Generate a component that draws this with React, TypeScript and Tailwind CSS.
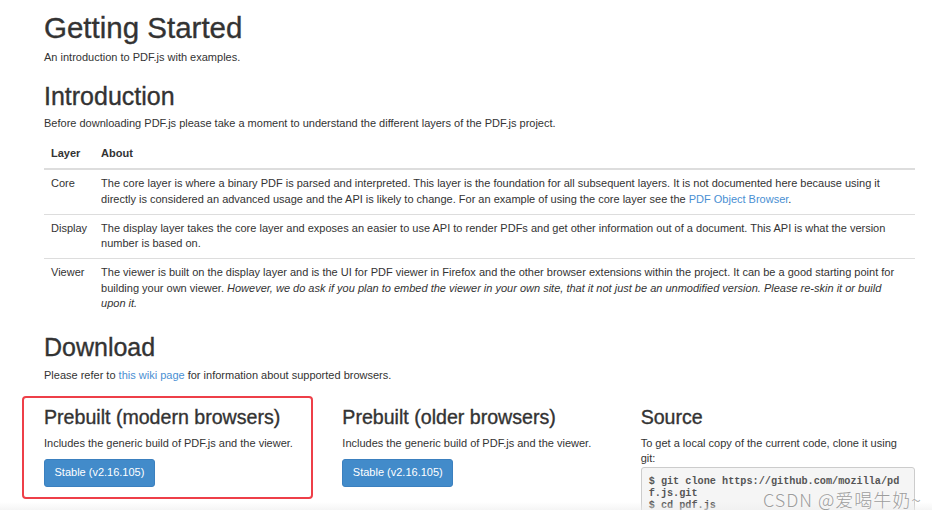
import React from "react";

const linkCls = "text-[#4a8fd3]";
const headStroke = "[-webkit-text-stroke:0.35px_#333]";
const cell = "px-[7px] pt-[6px] pb-[6.5px] align-top";

function StableButton() {
  return (
    <button className="rounded-[3px] border border-[#3b80bf] bg-[#428bca] px-[9.5px] py-[5px] text-[11px] leading-[15.5px] text-white">
      Stable (v2.16.105)
    </button>
  );
}

export default function App() {
  return (
    <div className="relative h-[517px] w-[932px] overflow-hidden bg-white font-['Liberation_Sans',Arial,sans-serif] text-[#333]">
      <div className="relative h-[510px] overflow-hidden">
        <div className="ml-[44px] w-[871px]">
          <h1 className={`mt-[12px] text-[29.5px] leading-[32px] ${headStroke}`}>Getting Started</h1>
          <p className="mt-[6px] text-[11px] leading-[15.5px]">An introduction to PDF.js with examples.</p>

          <h2 className={`mt-[17px] text-[25px] leading-[27px] ${headStroke}`}>Introduction</h2>
          <p className="mt-[6.5px] text-[11px] leading-[15.5px]">
            Before downloading PDF.js please take a moment to understand the different layers of the PDF.js project.
          </p>

          <table className="mt-[7px] w-full border-collapse text-left text-[11px] leading-[15.5px]">
            <thead>
              <tr className="border-b-2 border-[#ddd]">
                <th className="w-[46px] px-[7px] py-[7px] font-bold">Layer</th>
                <th className="px-[7px] py-[7px] font-bold">About</th>
              </tr>
            </thead>
            <tbody>
              <tr className="border-b border-[#ddd]">
                <td className={cell}>Core</td>
                <td className={cell}>
                  The core layer is where a binary PDF is parsed and interpreted. This layer is the foundation for all
                  subsequent layers. It is not documented here because using it directly is considered an advanced usage
                  and the API is likely to change. For an example of using the core layer see the{" "}
                  <a className={linkCls}>PDF Object Browser</a>.
                </td>
              </tr>
              <tr className="border-b border-[#ddd]">
                <td className={cell}>Display</td>
                <td className={cell}>
                  The display layer takes the core layer and exposes an easier to use API to render PDFs and get other
                  information out of a document. This API is what the version number is based on.
                </td>
              </tr>
              <tr>
                <td className={cell}>Viewer</td>
                <td className={cell}>
                  The viewer is built on the display layer and is the UI for PDF viewer in Firefox and the other browser
                  extensions within the project. It can be a good starting point for building your own viewer.{" "}
                  <em>
                    However, we do ask if you plan to embed the viewer in your own site, that it not just be an
                    unmodified version. Please re-skin it or build upon it.
                  </em>
                </td>
              </tr>
            </tbody>
          </table>

          <h2 className={`mt-[16px] text-[25px] leading-[27px] ${headStroke}`}>Download</h2>
          <p className="mt-[6.75px] text-[11px] leading-[15.5px]">
            Please refer to <a className={linkCls}>this wiki page</a> for information about supported browsers.
          </p>

          <div className="mt-[23.5px] grid grid-cols-3 gap-x-[24px]">
            <div className="relative">
              <h3 className={`text-[19.6px] leading-[21.5px] ${headStroke}`}>Prebuilt (modern browsers)</h3>
              <p className="mt-[7.5px] text-[11px] leading-[15.5px]">
                Includes the generic build of PDF.js and the viewer.
              </p>
              <div className="mt-[8px]">
                <StableButton />
              </div>
              {/* highlight box drawn over the first column */}
              <div className="absolute -left-[22px] -top-[10.5px] h-[103px] w-[291px] rounded-[4px] border-2 border-[#ee3f48]" />
            </div>

            <div>
              <h3 className={`text-[19.6px] leading-[21.5px] ${headStroke}`}>Prebuilt (older browsers)</h3>
              <p className="mt-[7.5px] text-[11px] leading-[15.5px]">
                Includes the generic build of PDF.js and the viewer.
              </p>
              <div className="mt-[8px]">
                <StableButton />
              </div>
            </div>

            <div>
              <h3 className={`text-[19.6px] leading-[21.5px] ${headStroke}`}>Source</h3>
              <p className="mt-[7.5px] pr-[6px] text-[11px] leading-[15.5px]">
                To get a local copy of the current code, clone it using git:
              </p>
              <pre className="rounded-[3px] border border-[#ccc] bg-[#f5f5f5] px-[7px] pt-[8.5px] pb-[8px] font-['Liberation_Mono','Courier_New',monospace] text-[10.2px] font-bold leading-[12px] whitespace-pre-wrap break-all text-[#555]">
                {"$ git clone https://github.com/mozilla/pdf.js.git\n$ cd pdf.js\n$ gulp server"}
              </pre>
            </div>
          </div>
        </div>

        <div className="pointer-events-none absolute inset-x-0 bottom-0 h-[8px] bg-gradient-to-b from-transparent to-[#eeeeee]/60" />
      </div>

      <div className="absolute right-[10px] top-[487px] font-['Noto_Sans_CJK_SC',sans-serif] text-[18px] font-light leading-[24px] tracking-[1px] text-[#9d9d9d] [text-shadow:0_0_2px_#fff]">
        CSDN @爱喝牛奶~
      </div>
    </div>
  );
}
